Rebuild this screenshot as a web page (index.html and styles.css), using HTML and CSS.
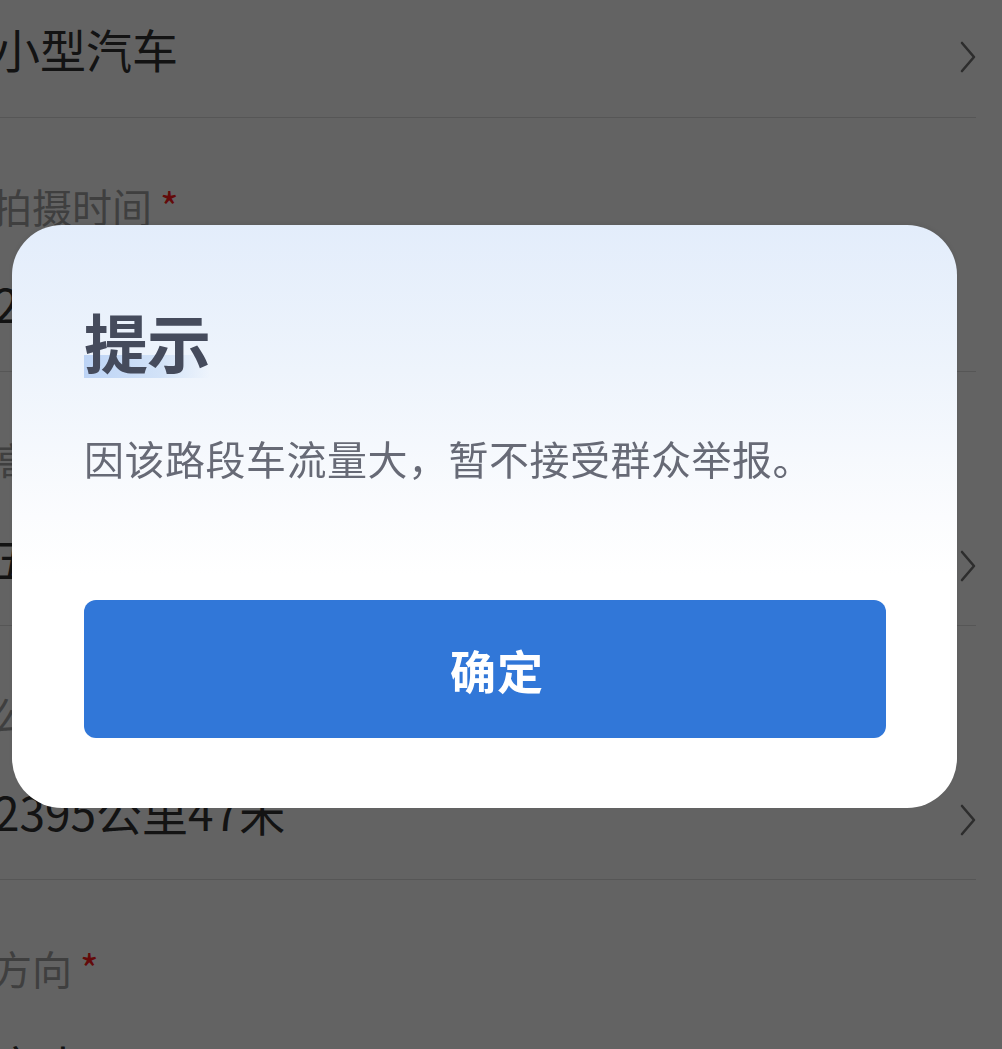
FILE: index.html
```html
<!DOCTYPE html>
<html lang="zh-CN">
<head>
<meta charset="utf-8">
<title>提示</title>
<link rel="stylesheet" href="styles.css">
</head>
<body>
<div class="form">
  <div class="row first">
    <div class="value-line">
      <span class="value">小型汽车</span>
      <svg class="chev" viewBox="0 0 16 32" width="16" height="32"><polyline points="2,2 14,16 2,30" fill="none" stroke="#747474" stroke-width="2.6" stroke-linecap="round" stroke-linejoin="round"/></svg>
    </div>
  </div>
  <div class="row">
    <div class="label">拍摄时间<span class="req">*</span></div>
    <div class="value-line">
      <span class="value">2024-05-18 09:32</span>
    </div>
  </div>
  <div class="row">
    <div class="label">高速路段<span class="req">*</span></div>
    <div class="value-line">
      <span class="value">五环路</span>
      <svg class="chev" viewBox="0 0 16 32" width="16" height="32"><polyline points="2,2 14,16 2,30" fill="none" stroke="#747474" stroke-width="2.6" stroke-linecap="round" stroke-linejoin="round"/></svg>
    </div>
  </div>
  <div class="row">
    <div class="label">公里数<span class="req">*</span></div>
    <div class="value-line">
      <span class="value">2395公里47米</span>
      <svg class="chev" viewBox="0 0 16 32" width="16" height="32"><polyline points="2,2 14,16 2,30" fill="none" stroke="#747474" stroke-width="2.6" stroke-linecap="round" stroke-linejoin="round"/></svg>
    </div>
  </div>
  <div class="row">
    <div class="label">方向<span class="req">*</span></div>
    <div class="value-line">
      <span class="value">京出</span>
    </div>
  </div>
</div>

<div class="mask"></div>

<div class="dialog">
  <div class="title"><span class="title-text">提示</span></div>
  <p class="message">因该路段车流量大，暂不接受群众举报。</p>
  <button class="confirm" type="button">确定</button>
</div>
</body>
</html>
```

FILE: styles.css
```css
html, body {
  margin: 0;
  padding: 0;
  width: 1002px;
  height: 1049px;
  overflow: hidden;
  background: #ffffff;
  font-family: "Noto Sans CJK SC", "Noto Sans", sans-serif;
}

.form {
  padding-right: 26px;
  margin-left: -6px;
}

.row {
  display: flex;
  flex-direction: column;
  padding: 63px 0 40px 0;
  border-bottom: 1px solid #dedede;
}

.row.first {
  padding-top: 20px;
  padding-bottom: 41px;
}

.label {
  font-size: 40px;
  line-height: 50px;
  height: 50px;
  color: #a3a3a3;
  margin-left: -2px;
  margin-bottom: 44px;
}

.req {
  color: #ff1a1a;
  margin-left: 8px;
}

.value-line {
  display: flex;
  align-items: center;
  justify-content: space-between;
  height: 56px;
}

.value {
  font-size: 46px;
  line-height: 56px;
  color: #333333;
  white-space: nowrap;
}

.chev {
  margin-top: 18px;
  margin-right: 0;
  flex: none;
}

.mask {
  position: fixed;
  inset: 0;
  background: rgba(0, 0, 0, 0.61);
}

.dialog {
  position: fixed;
  left: 12px;
  top: 225px;
  width: 945px;
  box-sizing: border-box;
  padding: 75px 71px 70px 72px;
  border-radius: 50px;
  background: linear-gradient(180deg, #e3edfb 0%, #eef4fc 25%, #fbfcfe 50%, #ffffff 60%);
  box-shadow: 0 -2px 6px rgba(0, 0, 0, 0.08);
  display: flex;
  flex-direction: column;
}

.title {
  height: 80px;
  line-height: 80px;
}

.title-text {
  display: inline-block;
  font-size: 64px;
  font-weight: 700;
  color: #454b5c;
  letter-spacing: -1px;
  background: linear-gradient(90deg, rgba(186, 210, 245, 0.95) 0%, rgba(200, 220, 246, 0.75) 60%, rgba(230, 238, 250, 0) 100%) no-repeat;
  background-size: 100% 23px;
  background-position: 0 55px;
}

.message {
  margin: 50px 0 0 0;
  font-size: 40px;
  line-height: 56px;
  height: 56px;
  color: #676a76;
  white-space: nowrap;
  letter-spacing: 0.5px;
}

.confirm {
  margin-top: 114px;
  height: 138px;
  width: 100%;
  border: none;
  border-radius: 12px;
  background: #3177d8;
  color: #ffffff;
  font-family: "Noto Sans CJK SC", "Noto Sans", sans-serif;
  font-size: 46px;
  font-weight: 700;
  letter-spacing: 1px;
  padding: 0 0 0 24px;
}
```
